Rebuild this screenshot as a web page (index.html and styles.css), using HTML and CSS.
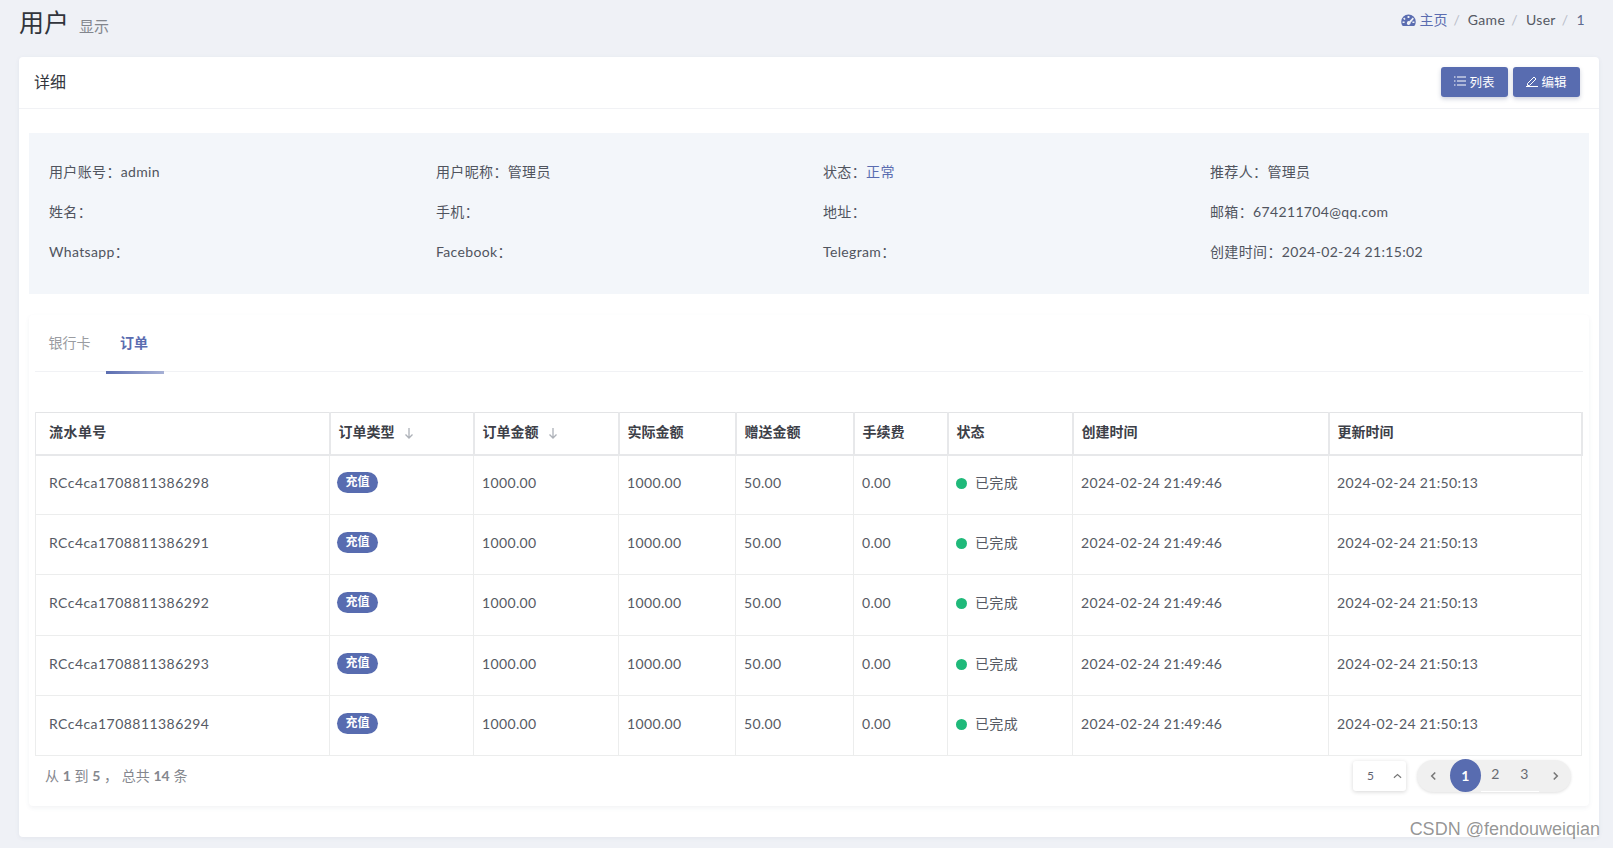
FILE: index.html
```html
<!DOCTYPE html>
<html lang="zh">
<head>
<meta charset="utf-8">
<title>用户 显示</title>
<link rel="stylesheet" href="styles.css">
</head>
<body>
<header class="page-head">
  <h1 class="page-title">用户<small>显示</small></h1>
  <ol class="crumbs">
    <li class="crumb-home"><svg class="gauge" viewBox="0 0 16 14" width="15" height="13"><path fill="#5a6cb0" fill-rule="evenodd" d="M8 0.5a7.8 7.8 0 0 0-7.8 7.8c0 1.9.6 3.4 1.7 4.7h12.2c1.1-1.3 1.7-2.8 1.7-4.7A7.8 7.8 0 0 0 8 .5zM7 2.2h2v2.2H7zM3.4 3.8l1.5 1.5-1.2 1.2-1.5-1.5zM12.6 3.8l1.2 1.2-3.6 4.3a2.2 2.2 0 0 1-3 2.4 2.2 2.2 0 0 1 1.6-4zM1.6 8h2.2v1.8H1.6zM12.2 8h2.2v1.8h-2.2z"/></svg>主页</li>
    <li>Game</li>
    <li>User</li>
    <li class="crumb-last">1</li>
  </ol>
</header>
<main class="card">
  <div class="card-head">
    <span class="card-title">详细</span>
    <div class="actions">
      <a class="btn"><svg viewBox="0 0 12 10" width="12" height="10"><path stroke="#fff" stroke-width="1" fill="none" d="M3 1h9M3 5h9M3 9h9M0 1h1.500M0 5h1.500M0 9h1.500"/></svg>列表</a>
      <a class="btn"><svg viewBox="0 0 12 12" width="12" height="12"><path stroke="#fff" stroke-width="1" fill="none" d="M1.500 8.500 8 2l2 2-6.500 6.500H1.500zM0 11.500h12"/></svg>编辑</a>
    </div>
  </div>
  <div class="card-body">
    <section class="info">
      <div>用户账号：admin</div><div>用户昵称：管理员</div><div>状态：<span class="link">正常</span></div><div>推荐人：管理员</div>
      <div>姓名：</div><div>手机：</div><div>地址：</div><div>邮箱：674211704@qq.com</div>
      <div>Whatsapp：</div><div>Facebook：</div><div>Telegram：</div><div>创建时间：2024-02-24 21:15:02</div>
    </section>
    <section class="panel">
      <nav class="tabs">
        <a class="tab">银行卡</a>
        <a class="tab tab-on">订单</a>
      </nav>
      <table class="grid">
        <colgroup>
          <col class="c1"><col class="c2"><col class="c3"><col class="c4"><col class="c5"><col class="c6"><col class="c7"><col class="c8"><col class="c9">
        </colgroup>
        <thead>
          <tr>
            <th class="first">流水单号</th>
            <th>订单类型<svg class="sort" viewBox="0 0 10 12" width="10" height="12"><path d="M5 1v10M1.500 7.500 5 11l3.500-3.500" stroke="#adb1b8" stroke-width="1.300" fill="none"/></svg></th>
            <th>订单金额<svg class="sort" viewBox="0 0 10 12" width="10" height="12"><path d="M5 1v10M1.500 7.500 5 11l3.500-3.500" stroke="#adb1b8" stroke-width="1.300" fill="none"/></svg></th>
            <th>实际金额</th><th>赠送金额</th><th>手续费</th><th>状态</th><th>创建时间</th><th>更新时间</th>
          </tr>
        </thead>
        <tbody>
          <tr><td class="first">RCc4ca1708811386298</td><td class="tag-cell"><span class="tag">充值</span></td><td>1000.00</td><td>1000.00</td><td>50.00</td><td>0.00</td><td class="st"><i class="dot"></i>已完成</td><td>2024-02-24 21:49:46</td><td>2024-02-24 21:50:13</td></tr>
          <tr><td class="first">RCc4ca1708811386291</td><td class="tag-cell"><span class="tag">充值</span></td><td>1000.00</td><td>1000.00</td><td>50.00</td><td>0.00</td><td class="st"><i class="dot"></i>已完成</td><td>2024-02-24 21:49:46</td><td>2024-02-24 21:50:13</td></tr>
          <tr><td class="first">RCc4ca1708811386292</td><td class="tag-cell"><span class="tag">充值</span></td><td>1000.00</td><td>1000.00</td><td>50.00</td><td>0.00</td><td class="st"><i class="dot"></i>已完成</td><td>2024-02-24 21:49:46</td><td>2024-02-24 21:50:13</td></tr>
          <tr><td class="first">RCc4ca1708811386293</td><td class="tag-cell"><span class="tag">充值</span></td><td>1000.00</td><td>1000.00</td><td>50.00</td><td>0.00</td><td class="st"><i class="dot"></i>已完成</td><td>2024-02-24 21:49:46</td><td>2024-02-24 21:50:13</td></tr>
          <tr><td class="first">RCc4ca1708811386294</td><td class="tag-cell"><span class="tag">充值</span></td><td>1000.00</td><td>1000.00</td><td>50.00</td><td>0.00</td><td class="st"><i class="dot"></i>已完成</td><td>2024-02-24 21:49:46</td><td>2024-02-24 21:50:13</td></tr>
        </tbody>
      </table>
      <footer class="foot">
        <span class="summary">从 <b>1</b> 到 <b>5</b> ， 总共 <b>14</b> 条</span>
        <div class="pager-wrap">
          <div class="size"><span>5</span><svg viewBox="0 0 10 6" width="9" height="6"><path d="M1 5 5 1.500 9 5" stroke="#777" stroke-width="1.300" fill="none"/></svg></div>
          <div class="pager">
            <a class="pg pg-arrow"><svg viewBox="0 0 8 10" width="7" height="10"><path d="M6 1 2 5l4 4" stroke="#777" stroke-width="1.800" fill="none"/></svg></a>
            <a class="pg pg-on">1</a>
            <a class="pg pg-num">2</a>
            <a class="pg pg-num">3</a>
            <a class="pg pg-arrow"><svg viewBox="0 0 8 10" width="7" height="10"><path d="M2 1l4 4-4 4" stroke="#777" stroke-width="1.800" fill="none"/></svg></a>
          </div>
        </div>
      </footer>
    </section>
  </div>
</main>
<div class="mark">CSDN @fendouweiqian</div>
</body>
</html>
```
FILE: styles.css
```css
* { box-sizing: border-box; }
html, body { margin: 0; height: 848px; overflow: hidden; }
body {
  background: #eff1f6;
  font-family: Lato, "Noto Sans CJK SC", sans-serif;
  font-size: 14px;
  letter-spacing: .35px;
  color: #50545e;
  padding: 0 14px 0 19px;
  position: relative;
}
.page-head {
  height: 57px;
  display: flex;
  justify-content: space-between;
  align-items: flex-start;
}
.page-title {
  margin: 7px 0 0;
  font-size: 25px;
  line-height: 30px;
  font-weight: 400;
  letter-spacing: 0;
  color: #32353c;
}
.page-title small {
  font-size: 15px;
  color: #83868d;
  margin-left: 10px;
}
.crumbs {
  list-style: none;
  display: flex;
  margin: 10px 14px 0 0;
  padding: 0;
  line-height: 20px;
}
.crumbs li { display: flex; align-items: center; color: #555964; }
.crumbs li::after { content: "/"; color: #b9bdc9; margin: 0 8px 0 6px; }
.crumbs li.crumb-last::after { content: none; }
.crumbs li.crumb-last { color: #5f6b8f; }
.crumbs li.crumb-home { color: #5a6cb0; letter-spacing: 0; }
.gauge { margin-right: 3px; }
.card {
  background: #fff;
  border-radius: 4px;
  height: 780px;
  box-shadow: 0 1px 4px rgba(90, 100, 130, .08);
}
.card-head {
  height: 52px;
  border-bottom: 1px solid #f1f2f5;
  display: flex;
  align-items: center;
  justify-content: space-between;
  padding: 0 19px 3px 15px;
}
.card-title { font-size: 16px; letter-spacing: 0; color: #33363d; }
.actions { display: flex; gap: 5px; margin-top: 2px; }
.btn {
  width: 67px;
  height: 30px;
  background: #586cb0;
  border-radius: 3px;
  color: #fff;
  font-size: 12.500px;
  letter-spacing: 0;
  padding-bottom: 2px;
  display: flex;
  align-items: center;
  justify-content: center;
  gap: 3px;
  box-shadow: 0 2px 4px rgba(60, 70, 120, .25);
}
.card-body { padding: 24px 10px 0; }
.info {
  background: #f3f6fa;
  height: 161px;
  padding: 18px 6px 0 20px;
  display: grid;
  grid-template-columns: repeat(4, 387px);
  grid-auto-rows: 40px;
  align-items: center;
}
.link { color: #5a6cb0; }
.panel {
  margin-top: 21px;
  height: 491px;
  padding: 0 6px;
  border-radius: 4px;
  box-shadow: 0 2px 4px rgba(90, 100, 130, .08);
}
.tabs {
  height: 57px;
  display: flex;
  padding-top: 1px;
  border-bottom: 1px solid #f1f2f5;
  margin-bottom: 40px;
}
.tab {
  width: 70px;
  height: 58px;
  display: flex;
  align-items: center;
  justify-content: center;
  padding: 0 2px 7px 0;
  color: #9a9ca1;
  letter-spacing: 0;
}
.tab:first-child { width: 71px; }
.tab-on {
  width: 58px;
  color: #5a6cb0;
  font-weight: 700;
  padding-bottom: 4px;
  border-bottom: 3px solid;
  border-image: linear-gradient(90deg, #5a6cb0, #a8b2d6) 1;
}
.grid {
  width: 1546px;
  table-layout: fixed;
  border-collapse: collapse;
  border: 1px solid #e3e4e6;
}
.c1 { width: 294px; }
.c2 { width: 144px; }
.c3 { width: 145px; }
.c4 { width: 117px; }
.c5 { width: 118px; }
.c6 { width: 94px; }
.c7 { width: 125px; }
.c8 { width: 256px; }
.c9 { width: 253px; }
.grid th, .grid td {
  border: 1px solid #eceded;
  padding: 0 0 0 8px;
  text-align: left;
  white-space: nowrap;
}
.grid th {
  height: 42px;
  border-width: 0 2px 2px 1px;
  border-color: #e7e8ea;
  padding-bottom: 4px;
  font-weight: 700;
  letter-spacing: 0;
  color: #3d4048;
}
.grid td { height: 60.200px; padding-bottom: 4px; color: #565a64; }
.grid td.st { padding-bottom: 5px; }
.grid .first { padding-left: 13px; letter-spacing: .45px; }
.sort { margin-left: 9px; vertical-align: -2px; }
.grid td.tag-cell { padding-left: 7px; }
.tag {
  display: inline-block;
  width: 41px;
  height: 21px;
  line-height: 20px;
  text-align: center;
  border-radius: 11px;
  background: #586cb0;
  color: #fff;
  font-size: 12px;
  font-weight: 700;
  letter-spacing: 0;
}
.dot {
  display: inline-block;
  width: 11px;
  height: 11px;
  border-radius: 50%;
  background: #1fb97a;
  margin-right: 8px;
  vertical-align: -1px;
}
.foot {
  display: flex;
  justify-content: space-between;
  align-items: flex-start;
  padding: 4px 12px 0 10px;
}
.summary { color: #84878e; margin-top: 5px; letter-spacing: .05px; }
.summary b { font-weight: 700; }
.pager-wrap { display: flex; gap: 11px; align-items: flex-start; }
.size {
  width: 53px;
  height: 30px;
  margin-top: 1px;
  background: #fff;
  border-radius: 3px;
  box-shadow: 0 1px 4px rgba(0, 0, 0, .16);
  display: flex;
  align-items: center;
  justify-content: space-between;
  padding: 0 4px 0 14px;
  font-size: 12px;
  color: #5f6270;
}
.pager {
  width: 154px;
  height: 32px;
  background: #f0f0f0;
  border-radius: 16px;
  box-shadow: 0 1px 3px rgba(0, 0, 0, .12);
  display: flex;
  padding-left: 12px;
  color: #686b72;
}
.pg { display: flex; align-items: center; justify-content: center; }
.pg-arrow { width: 8px; }
.pg-arrow:last-child { margin-left: 12px; }
.pg-on {
  width: 31px;
  height: 33px;
  margin: -1px 0 0 13px;
  background: #586cb0;
  border-radius: 50%;
  color: #fff;
  font-weight: 700;
}
.pg-num {
  width: 29px;
  height: 32px;
  padding-bottom: 4px;
  border-bottom: 1px solid #fff;
}
.mark {
  position: absolute;
  right: 13px;
  bottom: 9px;
  font-family: "Liberation Sans", sans-serif;
  font-size: 18px;
  line-height: 20px;
  letter-spacing: 0;
  color: rgba(90, 90, 90, .65);
}
```
